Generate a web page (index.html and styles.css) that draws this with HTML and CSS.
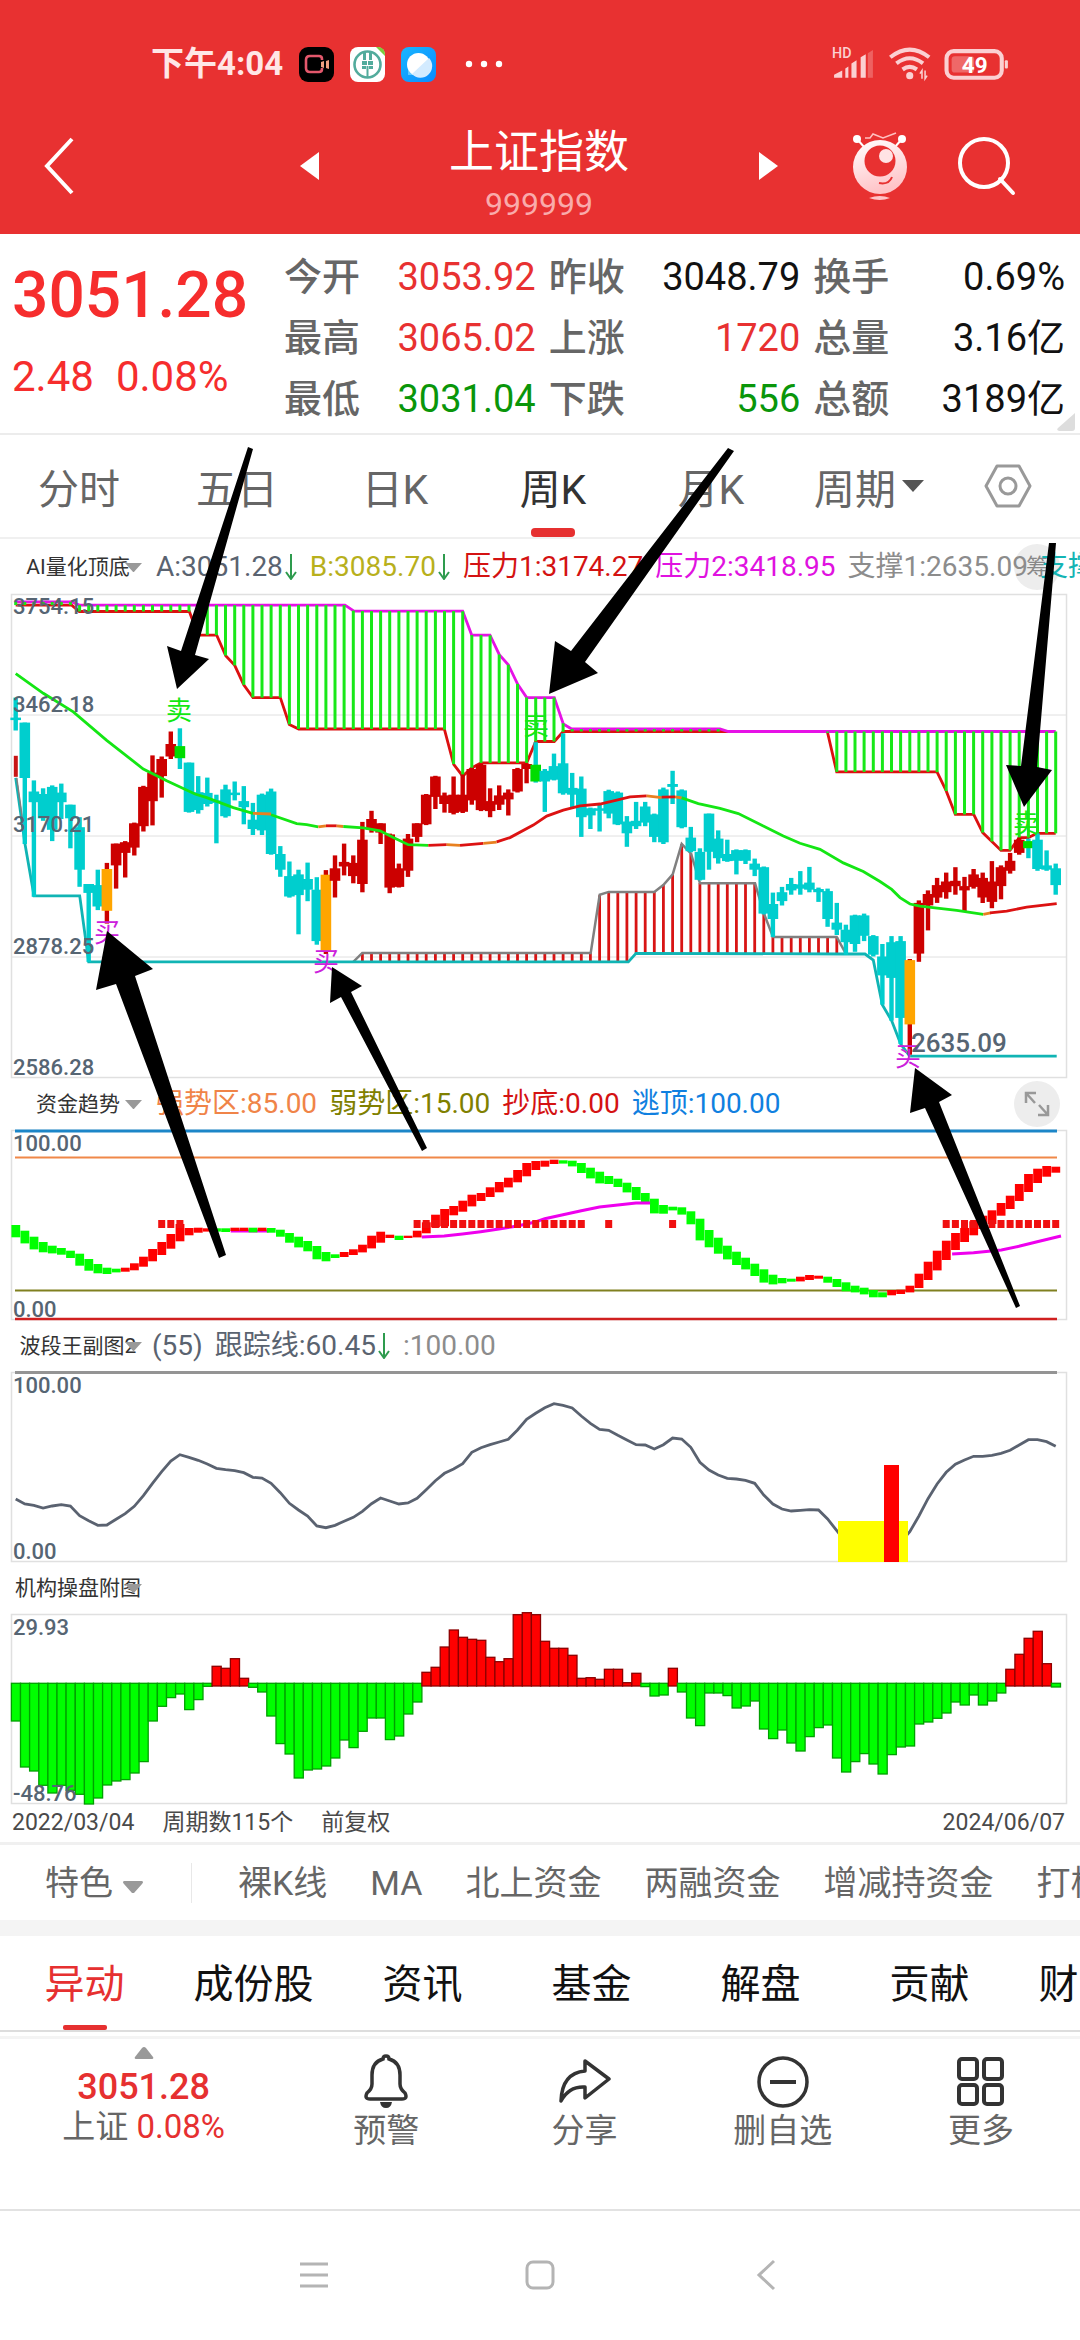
FILE: index.html
```html
<!DOCTYPE html>
<html lang="zh-CN">
<head>
<meta charset="utf-8">
<meta name="viewport" content="width=device-width, initial-scale=1">
<title>上证指数 999999</title>
<link rel="stylesheet" href="styles.css">
</head>
<body>
<header class="top">
  <div class="status">
    <span class="clock">下午4:04</span>
    <svg class="app" viewBox="0 0 35 35"><rect width="35" height="35" rx="9" fill="#000"/><path d="M23 13v-1q0-3-3-3h-9q-4 0-4 4v8q0 4 4 4h9q3 0 3-3v-1" fill="none" stroke="#e4586c" stroke-width="2.6"/><path d="M22 15l3-1v7l-3-1zM27 14l3-1v9l-3-1z" fill="#f0a080"/></svg>
    <svg class="app" viewBox="0 0 35 35"><rect width="35" height="35" rx="8" fill="#fff"/><path d="M26 0h3q6 1 6 8v1z" fill="#7bcb3c"/><circle cx="17.500" cy="17.500" r="13" fill="none" stroke="#52ab9c" stroke-width="2.600"/><path d="M13 4v9h3V4zm6 0v9h3V4zM12 14h5v4h-5zm6 0h5v4h-5zM12 19h4v3h-4zm7 0h4v3h-4zM16.500 19h2v12h-2z" fill="#52ab9c"/></svg>
    <svg class="app" viewBox="0 0 35 35"><defs><linearGradient id="sky" x2="1" y2="1"><stop stop-color="#19b6ff"/><stop offset="1" stop-color="#0a8bff"/></linearGradient></defs><rect width="35" height="35" rx="8" fill="url(#sky)"/><path d="M7 18v10h10z" fill="#5fc7ff"/><circle cx="17.500" cy="17.500" r="11.500" fill="#fff"/><path d="M28 11a11.500 11.500 0 0 1-17 16z" fill="#d3ebff"/></svg>
    <svg class="dots" viewBox="0 0 38 8"><g fill="#fff"><circle cx="4" cy="4" r="3.200"/><circle cx="19" cy="4" r="3.200"/><circle cx="34" cy="4" r="3.200"/></g></svg>
    <svg class="signals" viewBox="0 0 176 36"><g fill="#fbd0d2"><text x="0" y="12" font-size="14" font-weight="500">HD</text><path d="M2 31v-3l8-4v7zM13 31v-9l3-2v11zM19 31V17l5-3v17zM28 31V11l5-3v23z"/><path d="M35 31V7l5-3v27z" opacity=".3"/><circle cx="76" cy="29" r="3.500"/><path d="M88 32v-8l-2 3m5-3v8l2-3" fill="none" stroke="#fbd0d2" stroke-width="1.500"/><path d="M69 23q7-5 14 0M63 17q13-10 26 0M57 11q19-15 38 0" fill="none" stroke="#fbd0d2" stroke-width="4"/><rect x="112" y="5" width="54" height="26" rx="7" fill="none" stroke="#fbd0d2" stroke-width="4"/><rect x="117" y="10" width="22" height="16" rx="3" opacity=".35"/><rect x="169" y="14" width="3" height="8" rx="1"/><text x="127" y="26" font-size="22" font-weight="700" fill="#fff">49</text></g></svg>
  </div>
  <div class="titlebar">
    <button class="ico back" aria-label="返回"><svg viewBox="0 0 34 60"><path d="M31 3L6 30l25 27" fill="none" stroke="#fff" stroke-width="4"/></svg></button>
    <div class="switcher">
      <button class="ico step" aria-label="上一个"><svg viewBox="0 0 20 28"><path d="M19 0v28L0 14z" fill="#fff"/></svg></button>
      <div class="name"><h1>上证指数</h1><span>999999</span></div>
      <button class="ico step" aria-label="下一个"><svg viewBox="0 0 20 28"><path d="M1 0v28l19-14z" fill="#fff"/></svg></button>
    </div>
    <button class="ico bot" aria-label="助手"><svg viewBox="0 0 56 70"><defs><linearGradient id="pk" y2="1" x2=".3"><stop stop-color="#fff"/><stop offset="1" stop-color="#ffc4c8"/></linearGradient></defs><path d="M5 8l8 9M50 8l-8 9" stroke="#fff" stroke-width="2"/><circle cx="5" cy="8" r="4" fill="#fff"/><circle cx="50" cy="8" r="4" fill="#fff"/><path d="M13 7h5l3-4 10 4 13-5" fill="none" stroke="#ffc0c0" stroke-width="1.500"/><circle cx="28" cy="36" r="27" fill="url(#pk)"/><circle cx="28" cy="30" r="15.500" fill="#e83131"/><circle cx="34" cy="25" r="7" fill="#ffe3e4"/><path d="M27 52q10 2 13-6" fill="none" stroke="#e83131" stroke-width="2"/><path d="M17 67q11-4 21 0-10 4-21 0z" fill="#ffc4c8"/></svg></button>
    <button class="ico find" aria-label="搜索"><svg viewBox="0 0 58 60"><circle cx="26" cy="27" r="24" fill="none" stroke="#fff" stroke-width="4"/><path d="M42 43l13 14" stroke="#fff" stroke-width="4" stroke-linecap="round"/></svg></button>
  </div>
</header>

<main>
<section class="quote">
  <div class="price"><strong>3051.28</strong><p><span>2.48</span><span>0.08%</span></p></div>
  <dl class="stats">
    <div><dt>今开</dt><dd class="up">3053.92</dd></div>
    <div><dt>昨收</dt><dd>3048.79</dd></div>
    <div><dt>换手</dt><dd>0.69%</dd></div>
    <div><dt>最高</dt><dd class="up">3065.02</dd></div>
    <div><dt>上涨</dt><dd class="up">1720</dd></div>
    <div><dt>总量</dt><dd>3.16亿</dd></div>
    <div><dt>最低</dt><dd class="down">3031.04</dd></div>
    <div><dt>下跌</dt><dd class="down">556</dd></div>
    <div><dt>总额</dt><dd>3189亿</dd></div>
  </dl>
  <svg class="corner" viewBox="0 0 18 18"><path d="M18 0v15q0 3-3 3H2q-3-1-1-3z" fill="#ddd"/></svg>
</section>

<section class="analysis">
  <nav class="periods">
    <button>分时</button><button>五日</button><button>日K</button><button class="on">周K</button><button>月K</button>
    <button>周期<svg class="caret" viewBox="0 0 22 12"><path d="M0 0h22L11 12z" fill="#555"/></svg></button>
    <button class="gear" aria-label="设置"><svg viewBox="0 0 48 44"><path d="M13 2h22l11 20-11 20H13L2 22z" fill="none" stroke="#999" stroke-width="3" stroke-linejoin="round"/><circle cx="24" cy="22" r="8" fill="none" stroke="#999" stroke-width="3"/></svg></button>
  </nav>

  <div class="legend">
    <button class="pick">AI量化顶底<svg class="caret" viewBox="0 0 18 10"><path d="M0 0h18L9 10z" fill="#999"/></svg></button>
    <button class="round">筹</button>
    <div class="vals">
      <span class="slate">A:3051.28<svg class="dn" viewBox="0 0 14 26"><path d="M7 0v24M2 18l5 7 5-7" fill="none" stroke="#2e9b4e" stroke-width="2"/></svg></span>
      <span class="mustard">B:3085.70<svg class="dn" viewBox="0 0 14 26"><path d="M7 0v24M2 18l5 7 5-7" fill="none" stroke="#2e9b4e" stroke-width="2"/></svg></span>
      <span class="crimson">压力1:3174.27</span><span class="magenta">压力2:3418.95</span><span class="grey">支撑1:2635.09</span><span class="teal">支撑2:2635.09</span>
    </div>
  </div>
  <svg class="chart" id="kline" viewBox="0 0 1080 484"></svg>

  <div class="legend">
    <button class="pick">资金趋势<svg class="caret" viewBox="0 0 18 10"><path d="M0 0h18L9 10z" fill="#999"/></svg></button>
    <div class="vals">
      <span class="orange">强势区:85.00</span><span class="olive">弱势区:15.00</span><span class="crimson">抄底:0.00</span><span class="blue">逃顶:100.00</span>
    </div>
    <button class="round" aria-label="全屏"><svg viewBox="0 0 46 46"><path d="M12 22V12h10M12 12l9 10M34 24v10H24M34 34l-9-10" fill="none" stroke="#999" stroke-width="2.500"/></svg></button>
  </div>
  <svg class="chart" id="trend" viewBox="0 0 1080 190"></svg>

  <div class="legend">
    <button class="pick">波段王副图2<svg class="caret" viewBox="0 0 18 10"><path d="M0 0h18L9 10z" fill="#999"/></svg></button>
    <div class="vals tight">
      <span class="slate">(55)</span><span class="slate">跟踪线:60.45<svg class="dn" viewBox="0 0 14 26"><path d="M7 0v24M2 18l5 7 5-7" fill="none" stroke="#2e9b4e" stroke-width="2"/></svg></span><span class="grey">:100.00</span>
    </div>
  </div>
  <svg class="chart" id="band" viewBox="0 0 1080 190"></svg>

  <div class="legend">
    <button class="pick">机构操盘附图<svg class="caret" viewBox="0 0 18 10"><path d="M0 0h18L9 10z" fill="#999"/></svg></button>
  </div>
  <svg class="chart" id="inst" viewBox="0 0 1080 190"></svg>

  <div class="dates"><span>2022/03/04</span><span>周期数115个</span><span>前复权</span><span class="last">2024/06/07</span></div>

  <svg class="marks" viewBox="0 435 1080 885">
    <polygon points="248,447 253,449 195,655 209,659 177,689 167,646 181,651"/>
    <polygon points="728,448 734,451 585,662 598,673 549,694 555,641 571,651"/>
    <polygon points="1049,543 1056,543 1037,767 1052,770 1024,807 1006,765 1021,766"/>
    <polygon points="107,931 153,969 135,976 226,1255 219,1258 116,984 96,990"/>
    <polygon points="332,967 362,986 351,992 427,1148 422,1151 341,997 330,1003"/>
    <polygon points="915,1068 952,1095 939,1102 1020,1306 1016,1308 925,1108 910,1113"/>
  </svg>
</section>

<nav class="chips">
  <button class="feature">特色<svg class="caret" viewBox="0 0 20 13"><path d="M1 0h18q2 1 0 3l-8 9h-2L1 3q-2-2 0-3z" fill="#999"/></svg></button>
  <button>裸K线</button><button>MA</button><button>北上资金</button><button>两融资金</button><button>增减持资金</button><button>打板</button>
</nav>

<nav class="tabs">
  <button class="on">异动</button><button>成份股</button><button>资讯</button><button>基金</button><button>解盘</button><button>贡献</button><button>财富号</button>
</nav>
</main>

<footer>
  <div class="toolbar">
    <button class="mini">
      <svg class="tri" viewBox="0 0 20 12"><path d="M8 1q2-2 4 0l7 9q1 2-1 2H2q-2 0-1-2z" fill="#999"/></svg>
      <b>3051.28</b><span>上证 <i>0.08%</i></span>
    </button>
    <button><svg viewBox="0 0 52 56"><path d="M26 3q3 0 3 3 11 3 11 16v9q0 5 5 9 3 6-3 6H10q-6 0-3-6 5-4 5-9v-9Q12 9 23 6q0-3 3-3z" fill="none" stroke="#333" stroke-width="3.500"/><path d="M20 49h12q-1 6-6 6t-6-6z" fill="#333"/></svg>预警</button>
    <button><svg viewBox="0 0 52 56"><path d="M26 8l24 18-24 19V34Q10 33 2 48 3 20 26 18z" fill="none" stroke="#333" stroke-width="3.500" stroke-linejoin="round"/></svg>分享</button>
    <button><svg viewBox="0 0 52 56"><circle cx="26" cy="29" r="24" fill="none" stroke="#333" stroke-width="3.500"/><path d="M13 29h26" stroke="#333" stroke-width="4"/></svg>删自选</button>
    <button><svg viewBox="0 0 52 56"><g fill="none" stroke="#333" stroke-width="4"><rect x="4" y="6" width="18" height="20" rx="3"/><rect x="29" y="6" width="18" height="20" rx="3"/><rect x="4" y="32" width="18" height="19" rx="3"/><rect x="29" y="32" width="18" height="19" rx="3"/></g></svg>更多</button>
  </div>
  <div class="sysnav">
    <button class="ico" aria-label="菜单"><svg viewBox="0 0 32 32"><path d="M2 5h28M2 16h28M2 27h28" stroke="#b4b4b4" stroke-width="3"/></svg></button>
    <button class="ico" aria-label="主页"><svg viewBox="0 0 32 32"><rect x="3" y="3" width="26" height="26" rx="6" fill="none" stroke="#b4b4b4" stroke-width="3"/></svg></button>
    <button class="ico" aria-label="后退"><svg viewBox="0 0 32 32"><path d="M24 2L9 16l15 14" fill="none" stroke="#b4b4b4" stroke-width="3"/></svg></button>
  </div>
</footer>
<script src="charts.js"></script>
</body>
</html>
```
FILE: styles.css
```css
* { box-sizing: border-box; }
body {
  margin: 0;
  background: #fff;
  color: #111;
  font-family: Roboto, "Noto Sans CJK SC", sans-serif;
  overflow-x: hidden;
}
h1, p, dl, dd { margin: 0; font-weight: 400; }
button {
  margin: 0;
  padding: 0;
  border: 0;
  background: none;
  color: inherit;
  font: inherit;
  white-space: nowrap;
}
svg { display: block; }

.top { height: 234px; background: #e83131; color: #fff; }
.status { display: flex; align-items: center; gap: 16px; height: 98px; padding: 30px 68px 0 151px; }
.clock { font-size: 33px; font-weight: 700; line-height: 36px; color: #ffe6e6; }
.app { width: 35px; height: 35px; }
.dots { width: 38px; margin-left: 13px; }
.signals { width: 180px; margin-left: auto; }
.titlebar { display: flex; align-items: center; height: 136px; padding: 0 64px 0 41px; }
.ico svg { width: 100%; }
.back { width: 34px; }
.switcher { flex: 1; display: flex; align-items: center; justify-content: space-between; margin: 0 74px 0 225px; }
.step { width: 20px; }
.name { text-align: center; margin-top: 18px; }
.name h1 { font-size: 45px; line-height: 58px; }
.name span { display: block; font-size: 32px; line-height: 44px; color: #f9abab; }
.bot { width: 56px; margin-right: 50px; }
.find { width: 58px; }

.quote { position: relative; display: flex; height: 201px; border-bottom: 2px solid #ececec; padding-right: 15px; }
.price { width: 284px; padding: 24px 0 0 12px; color: #f62d2d; }
.price strong { display: block; font-size: 64px; line-height: 76px; font-weight: 500; }
.price p { display: flex; gap: 22px; font-size: 42px; line-height: 50px; margin-top: 18px; }
.stats { flex: 1; display: grid; grid-template-columns: repeat(3, 1fr); column-gap: 13px; grid-auto-rows: 61px; padding-top: 13px; font-size: 38px; line-height: 61px; }
.stats div { display: flex; justify-content: space-between; }
.stats dt { color: #666; font-weight: 500; }
.up { color: #e83131; }
.down { color: #0a960a; }
.corner { position: absolute; right: 5px; bottom: 2px; width: 18px; }

.analysis { position: relative; }
.periods { display: flex; height: 104px; padding-right: 12px; border-bottom: 2px solid #f0f0f0; color: #666; font-size: 41px; }
.periods button { position: relative; flex: 158; display: flex; align-items: center; justify-content: center; gap: 6px; }
.periods .gear { flex: 120; }
.gear svg { width: 48px; }
.periods .on { color: #333; }
.on::after { content: ""; position: absolute; left: 50%; bottom: 0; width: 44px; margin-left: -22px; background: #e63030; border-radius: 4px; height: 9px; }
.periods .caret { width: 22px; }

.legend { position: relative; display: flex; align-items: center; height: 52px; padding-left: 14px; overflow: hidden; }
.periods + .legend { height: 55px; }
.pick { position: relative; flex: none; width: 128px; font-size: 21px; line-height: 30px; color: #333; text-align: center; }
.pick .caret { position: absolute; right: 0; top: 11px; width: 17px; }
.vals { position: relative; display: flex; gap: 12px; margin-left: 14px; font-size: 28px; line-height: 40px; white-space: nowrap; }
.vals.tight { margin-left: 10px; }
.vals span { display: flex; align-items: center; }
.dn { width: 14px; margin-left: 1px; }
.round { position: absolute; right: 20px; width: 46px; height: 46px; border-radius: 50%; background: #ededed; color: #888; font-size: 22px; line-height: 46px; }
.slate { color: #5a6370; }
.mustard { color: #b8b01c; }
.crimson { color: #d41212; }
.magenta { color: #e012e0; }
.grey { color: #8c8c8c; }
.teal { color: #14b4b4; }
.orange { color: #f08448; }
.olive { color: #808000; }
.blue { color: #1080e0; }

.chart { width: 100%; height: auto; overflow: visible; }
.chart text { fill: #566573; font-size: 22px; font-weight: 500; }
.chart .big { font-size: 26px; }
.chart .sell { fill: #12e812; font-size: 26px; font-weight: 400; text-anchor: middle; }
.chart .buy { fill: #cc20dc; font-size: 26px; font-weight: 400; text-anchor: middle; }
.marks { position: absolute; left: 0; top: 0; width: 100%; pointer-events: none; }

.dates { display: flex; gap: 28px; height: 41px; padding: 0 15px 0 12px; font-size: 23px; line-height: 38px; color: #4a4a4a; border-bottom: 3px solid #f0f0f0; }
.last { margin-left: auto; }

.chips { display: flex; align-items: center; gap: 43px; height: 91px; padding-left: 45px; border-bottom: 16px solid #f4f4f4; overflow: hidden; color: #666; font-size: 34px; line-height: 40px; }
.feature { display: flex; align-items: center; gap: 10px; margin-right: 3px; padding-right: 48px; border-right: 1px solid #e8e8e8; }
.feature .caret { width: 20px; margin-top: 10px; }

.tabs { display: flex; height: 96px; overflow: hidden; border-bottom: 2px solid #ddd; font-size: 40px; }
.tabs button { position: relative; flex: 0 0 169px; padding-bottom: 4px; }
.tabs .on { color: #e63030; }
.tabs .on::after { height: 5px; border-radius: 2px; }

footer { border-top: 3px solid #f4f4f4; margin-top: 4px; }
.toolbar { display: flex; height: 172px; border-bottom: 2px solid #e2e2e2; color: #666; font-size: 33px; }
.toolbar button { flex: 198; display: flex; flex-direction: column; align-items: center; padding-top: 14px; line-height: 40px; }
.toolbar button svg { width: 52px; margin-bottom: 2px; }
.toolbar .mini { flex: 287; padding-top: 8px; }
.toolbar .mini .tri { width: 20px; margin-bottom: 8px; }
.mini b { font-size: 36px; font-weight: 500; color: #e63030; line-height: 40px; }
.mini i { font-style: normal; color: #e63030; }
.sysnav { display: flex; justify-content: center; gap: 194px; padding-top: 48px; height: 128px; }
.sysnav .ico { width: 32px; height: 32px; }
```
FILE: charts.js
```js
const N = 115, X0 = 15.7, STEP = 9.123;
const px = i => X0 + STEP * i;
const line = (pts, color, w = 2) => `<polyline points="${pts.map(p => p[0].toFixed(1) + ',' + p[1].toFixed(1)).join(' ')}" fill="none" stroke="${color}" stroke-width="${w}"/>`;
const rect = (x, y, w, h, c) => `<rect x="${x.toFixed(1)}" y="${y.toFixed(1)}" width="${w.toFixed(1)}" height="${h.toFixed(1)}" fill="${c}"/>`;
const label = (x, y, t, cls = '') => `<text x="${x}" y="${y}" class="${cls}">${t}</text>`;
const frame = h => `<rect x="11.500" y="0.500" width="1055" height="${h - 1}" fill="none" stroke="#e0e0e0" stroke-width="1.500"/>`;
const put = (id, html) => { document.getElementById(id).innerHTML = html; };
const nums = s => s.trim().split(/[\s,]+/).map(Number);

/* weekly candles: high, body top, body bottom, low (chart units) */
const candles = nums(`
440,496,503,532 510,510,665,850 672,703,733,998 694,710,778,785 686,690,810,842 681,706,733,780 740,740,778,862 775,803,922,970 962,962,987,1180 922,965,1025,1035
903,920,1037,1073 849,849,910,975 842,845,875,944 790,792,860,882 687,690,800,815 602,650,730,798 605,612,660,720 535,570,605,612 526,576,610,640 622,622,760,762
660,705,755,765 664,707,738,745 712,728,735,848 684,697,772,776 675,706,712,728 688,730,747,795 735,782,808,825 709,712,812,825 695,703,878,880 856,878,922,942
899,940,997,1000 922,935,993,1103 902,948,978,1010 943,978,1122,1132 923,936,1150,1158 882,918,953,1000 849,900,913,938 882,903,940,960 788,838,962,985 757,780,810,818
792,792,818,850 821,823,972,988 905,918,970,972 822,835,925,942 792,792,830,845 710,712,795,797 659,661,718,752 706,714,738,762 661,712,763,767 655,712,760,763
637,640,728,740 625,628,755,758 694,730,758,775 686,714,740,755 697,706,725,770 637,640,703,706 624,626,640,680 565,628,675,678 640,645,675,760 597,632,670,672
540,624,708,712 651,693,712,748 661,695,775,830 748,750,770,808 738,750,755,815 698,702,765,778 703,706,795,797 772,787,820,858 732,785,800,808 732,745,790,800
765,767,830,845 692,697,845,850 645,682,690,738 697,700,803,806 802,832,870,873 862,872,950,952 765,765,872,922 812,835,890,905 838,878,898,900 865,867,897,935
865,867,897,906 891,905,922,940 913,915,1045,1047 986,1018,1060,1110 970,985,1010,1022 945,962,980,992 926,963,975,992 914,958,978,985 972,976,985,1012 975,982,1060,1082
1015,1070,1090,1105 1076,1090,1125,1160 1048,1050,1130,1152 1045,1050,1107,1122 1105,1108,1160,1165 1130,1165,1218,1300 1108,1125,1225,1345 1108,1122,1337,1410 1172,1175,1355,1440 1008,1015,1157,1180
980,990,1022,1092 945,965,1000,1015 930,955,985,1003 915,953,968,992 942,968,980,1040 920,935,970,975 930,945,1000,1015 898,955,1012,1030 910,915,968,1005 875,897,925,933
832,838,875,880 835,842,862,890 820,838,920,925 868,910,922,925 905,918,965,992`);
const ky = v => (v - 150) / 2.8;
const kp = s => { const a = nums(s), r = []; for (let i = 0; i < a.length; i += 2) r.push([a[i] / 3, ky(a[i + 1])]); return r; };
const at = (pts, x) => {
  for (let i = 1; i < pts.length; i++) if (x <= pts[i][0]) {
    const [a, b] = [pts[i - 1], pts[i]];
    return a[1] + (b[1] - a[1]) * (x - a[0]) / (b[0] - a[0]);
  }
  return pts[pts.length - 1][1];
};
const p2 = kp('47,172 215,172 238,181 1035,181 1062,198 1388,198 1415,265 1470,265 1498,320 1525,348 1553,403 1580,440 1663,440 1690,514 1715,528 2160,528 2185,535 3167,535');
const p1 = kp('47,181 215,181 238,199 568,199 595,265 650,265 677,323 704,350 731,404 759,440 841,440 868,515 896,528 1333,528 1361,627 1388,660 1415,637 1443,623 1580,623 1607,563 1663,563 1690,535 2482,535 2510,648 2811,648 2838,700 2866,767 2921,767 2948,818 3003,868 3030,868 3058,832 3085,832 3112,820 3167,820');
const s2 = kp('47,665 75,850 102,995 239,995 266,1180 1885,1180 1908,1156 2532,1158 2595,1158 2620,1175 2647,1300 2675,1345 2702,1410 2729,1444 3170,1444');
const s1 = kp('1060,1180 1087,1155 1772,1155 1799,992 1826,984 1963,984 1990,965 2018,935 2045,850 2073,877 2100,960 2265,960 2292,1045 2319,1110 2510,1110 2537,1156');
let k = frame(484);
for (const y of [121, 242, 363]) k += line([[12, y], [1066, y]], '#e0e0e0', 1);
k += line(p1, '#dc1010', 2.8) + line(p2, '#e612e6', 2.8);
for (let i = 0; i < N; i++) {
  const x = px(i), a = at(p2, x), b = at(p1, x);
  if (b - a > 1) k += line([[x, a], [x, b]], '#18e818', 3);
  if (i >= 38 && i <= 90) k += line([[x, at(s1, x)], [x, at(s2, x)]], '#d81414', 2.8);
}
k += line(s1, '#808080', 2.5) + line(s2, '#10b4b4', 2.8) + line(kp('50,665 78,850'), '#808080', 1.5);
const marks = { 10: '#ffa500', 34: '#ffa500', 98: '#ffa500', 18: '#00dc00', 57: '#00dc00', 111: '#00dc00' };
for (let i = 0; i < N; i++) {
  const [h, t, b, l] = candles.slice(i * 4, i * 4 + 4).map(ky), x = px(i);
  const red = (i >= 10 && i <= 17) || (i >= 34 && i <= 56) || (i >= 98 && i <= 110);
  const c = red ? '#cc0000' : '#00cece';
  k += rect(x - 2.2, h, 4.4, l - h, c) + rect(x - 5.3, t, 10.6, Math.max(b - t, 2.5), marks[i] || c);
}
k += rect(13.8, ky(603), 4, 21, '#c81414');
const G = '#14e614', O = '#e88020', R = '#dc1212';
[[G, '47,373 130,428 220,480 320,560 430,640 500,673 585,710 620,720 700,748 759,764'], [O, '759,764 813,766'], [G, '813,768 890,793 920,796 955,802'], [O, '955,802 978,799'], [R, '978,799 1010,799'], [O, '1010,799 1030,801'],
 [G, '1030,801 1090,805 1140,813 1180,832 1225,852 1285,854'], [R, '1285,854 1340,852'], [O, '1340,852 1380,854'], [R, '1380,854 1450,848'], [O, '1450,848 1490,845'],
 [R, '1490,844 1530,832 1600,797 1640,772 1690,755 1740,743 1800,738 1850,727 1890,718 1940,715'], [O, '1940,715 1985,720'], [R, '1985,719 2025,718'], [O, '2025,718 2045,721'],
 [G, '2045,721 2095,737 2160,750 2215,765 2290,800 2350,828 2400,848 2460,865 2530,903 2590,927 2640,955 2675,977 2700,1000 2730,1018 2760,1024 2870,1036 2950,1047'], [O, '2950,1047 2972,1043'], [R, '2970,1043 3020,1038 3080,1027 3170,1017']
].forEach(([c, s]) => { k += line(kp(s), c, 2.8); });
k += label(13, 20, '3754.15') + label(13, 118, '3462.18') + label(13, 238, '3170.21') + label(13, 360, '2878.25') + label(13, 481, '2586.28');
k += label(179, 126, '卖', 'sell') + label(536, 141, '卖', 'sell') + label(1026, 239, '卖', 'sell');
k += label(107, 348, '买', 'buy') + label(326, 377, '买', 'buy') + label(908, 472, '买', 'buy') + label(911, 458, '2635.09', 'big');
put('kline', k);

/* capital trend: bar top, bar bottom */
const bars = nums(`433 470 450 488 468 506 484 515 495 518 502 522 510 532 519 555 535 570 550 578 561 580 564 575 561 573 548 569 528 558 505 542 484 523 460 504 430 482 442 464
441 456 443 453 443 453 443 454 441 451 441 451 441 455 441 451 442 456 447 468 457 486 468 500 481 512 496 536 514 542 521 532 514 529 506 523 492 515 465 503
453 486 462 472 465 478 465 472 450 470 425 458 402 440 385 437 376 404 360 393 342 377 337 361 320 349 304 335 291 320 268 305 247 287 241 268 240 258 237 250
239 249 240 257 247 277 261 293 273 308 286 310 294 319 306 335 319 358 337 370 354 398 373 399 378 389 380 402 392 431 414 479 448 500 471 519 495 536 513 553
531 566 549 586 566 606 582 611 592 608 594 603 588 602 583 598 585 594 588 606 595 619 605 632 615 635 621 641 628 650 635 650 628 644 627 640 615 635 579 622
543 598 510 569 480 538 457 508 442 484 422 464 405 445 389 430 367 405 345 385 310 361 280 334 264 307 256 288 258 276`);
const ty = v => (v - 148) / 3;
const isRed = i => (i >= 12 && i <= 21) || [24, 25, 27, 41].includes(i) || (i >= 36 && i <= 40) || (i >= 43 && i <= 59) || (i >= 86 && i <= 88) || i >= 96;
let t = frame(190);
const mg = s => { const a = nums(s), r = []; for (let i = 0; i < a.length; i += 2) r.push([a[i] / 2.904, ty(a[i + 1])]); return line(r, '#ee00ee', 3); };
t += line([[15, 1], [1057, 1]], '#1c86c8', 3) + line([[15, 27.5], [1057, 27.5]], '#f08848', 2) + line([[15, 160.5], [1057, 160.5]], '#808020', 2) + line([[15, 189], [1057, 189]], '#d02020', 2.5);
t += mg('670,451 780,451');
for (let i = 0; i < N; i++) {
  const a = ty(bars[i * 2]), b = ty(bars[i * 2 + 1]);
  t += rect(px(i) - 4.3, a, 8.8, b - a, isRed(i) ? '#ff0000' : '#00ff00');
}
t += mg('1225,469 1290,466 1343,460 1396,453 1449,445 1502,436 1555,424 1582,414 1635,402 1688,390 1741,379 1794,373 1847,367 1888,367') + mg('2765,520 2827,516 2908,508 2959,497 3012,483 3081,466');
for (let i = 0; i < N; i++)
  if ((i >= 16 && i <= 18) || (i >= 44 && i <= 62) || i === 65 || i === 72 || i >= 102) t += rect(px(i) - 3.5, 90, 7, 8, '#f01010');
t += label(13, 21, '100.00') + label(13, 187, '0.00');
put('trend', t);

/* tracking line */
const track = nums(`1255 1270 1274 1282 1276 1272 1276 1305 1320 1334 1333 1316 1299 1277 1245 1208 1173 1141 1122 1130 1139 1150 1163 1167 1170 1176 1190 1192 1208 1236
1268 1288 1306 1336 1341 1334 1322 1310 1292 1269 1252 1261 1270 1267 1253 1227 1200 1178 1165 1149 1115 1101 1092 1084 1076 1048 1016 998 981 969
974 982 1006 1028 1046 1049 1064 1078 1092 1093 1105 1092 1072 1075 1100 1145 1168 1183 1193 1195 1199 1208 1243 1270 1285 1291 1289 1287 1288 1315
1350 1385 1395 1400 1400 1400 1395 1385 1353 1306 1254 1210 1175 1151 1138 1127 1127 1124 1118 1109 1093 1077 1077 1083 1097`);
put('band', frame(190) + line([[15, 0.5], [1057, 0.5]], '#949494', 3)
  + line(track.map((v, i) => [px(i), (v - 874) / 3]), '#5a6270', 2.8)
  + rect(838, 149, 70, 41, '#ffff00') + rect(884, 93, 15, 97, '#ff0000')
  + label(13, 21, '100.00') + label(13, 187, '0.00'));

/* institution histogram: bar end, zero line near 373 */
const inst = nums(`482 620 632 675 698 675 690 702 731 713 674 662 658 638 604 482 438 412 401 448 418 378 318 324 295 354 381 395 467 550 581 653 629 626 617 593 539 562 513 473
473 538 527 461 425 336 321 260 209 231 237 240 291 304 295 163 157 163 243 264 264 285 354 352 357 327 327 367 339 379 407 404 324 395 473 496 398 398 406 443
437 422 506 535 509 548 572 529 502 494 593 635 604 580 611 641 583 560 557 491 485 474 458 425 434 404 434 422 398 327 282 234 213 310 380`);
let h = frame(190);
inst.forEach((v, i) => {
  const up = v < 373, a = ((up ? v : 369) - 161) / 3, b = ((up ? 377 : v) - 161) / 3;
  h += `<rect x="${(px(i) - 4.3).toFixed(1)}" y="${a.toFixed(1)}" width="9.100" height="${(b - a).toFixed(1)}" fill="${up ? '#ff0000' : '#00ff00'}" stroke="${up ? '#8c0000' : '#00a000'}" stroke-width="1.300"/>`;
});
put('inst', h + label(13, 21, '29.93') + label(13, 187, '-48.76'));
```
